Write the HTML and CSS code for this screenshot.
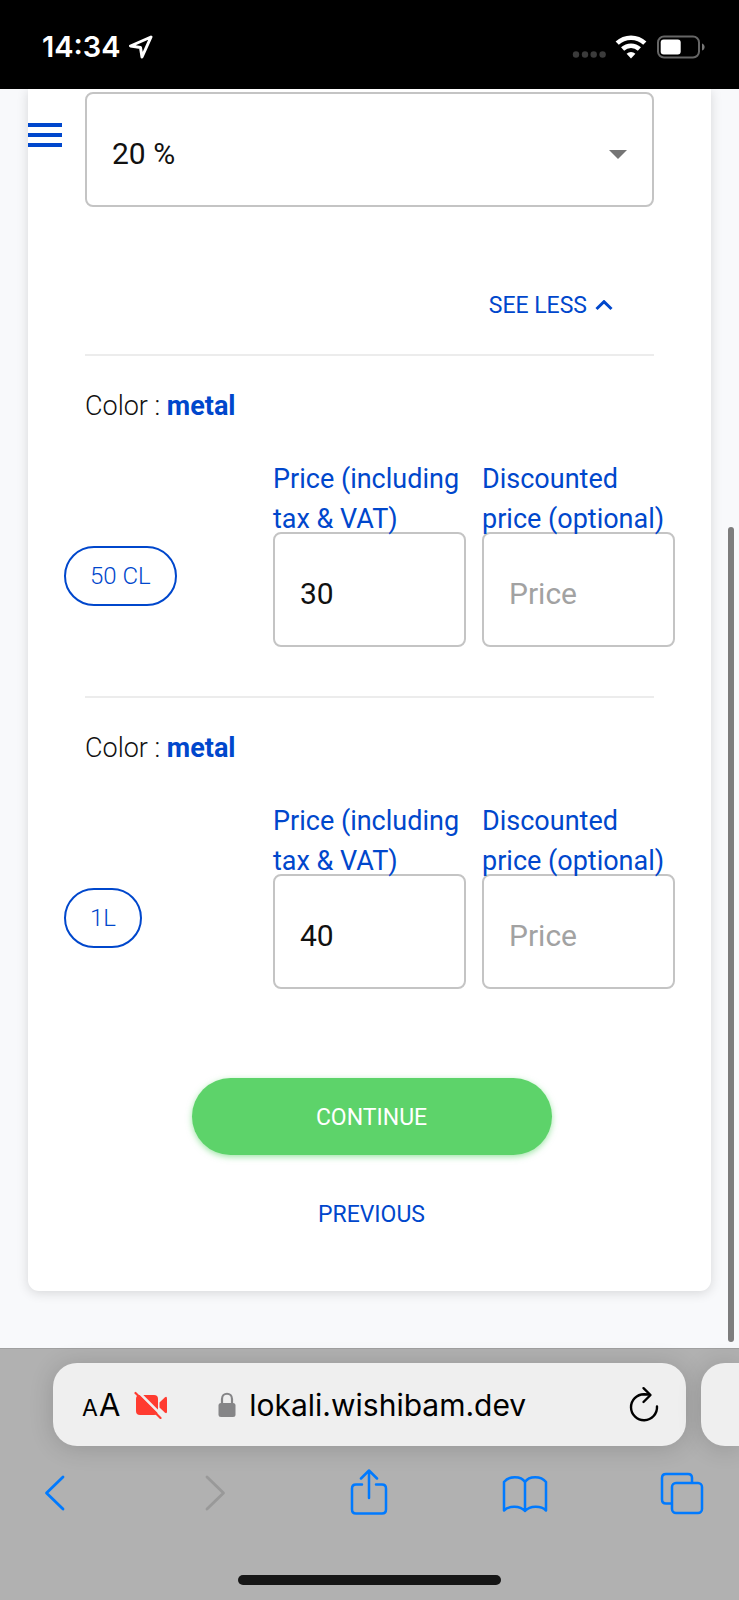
FILE: index.html
```html
<!DOCTYPE html>
<html lang="en">
  <head>
    <meta charset="UTF-8" />
    <meta name="viewport" content="width=device-width, initial-scale=1.0" />
    <title>Lokali - Product prices</title>
    <link rel="stylesheet" href="styles.css">
  </head>
  <body>
    <header class="status-bar">
      <div class="status-time">
        <span>14:34</span>
        <svg width="24" height="24" viewBox="0 0 24 24" fill="none" stroke="#fff" stroke-width="3" stroke-linejoin="round">
          <path d="M22 2 L1.500 11 L11.500 12.500 L13 22 Z" />
        </svg>
      </div>
      <div class="status-icons">
        <svg width="34" height="24" viewBox="0 0 34 24" fill="#3b3b3b">
          <circle cx="4" cy="19.500" r="3.200" />
          <circle cx="13" cy="19.500" r="3.200" />
          <circle cx="21.700" cy="19.500" r="3.200" />
          <circle cx="30.600" cy="19.500" r="3.200" />
        </svg>
        <svg width="32" height="24" viewBox="0 0 32 24" fill="none" stroke="#fff" stroke-width="4.600">
          <path d="M2.200 8.200 A20 20 0 0 1 29.800 8.200" />
          <path d="M7.600 14 A12.400 12.400 0 0 1 24.400 14" />
          <path d="M16 23.500 L11.600 18.800 A6.500 6.500 0 0 1 20.400 18.800 Z" fill="#fff" stroke="none" />
        </svg>
        <svg width="50" height="24" viewBox="0 0 50 24">
          <rect x="2" y="1.500" width="41" height="21" rx="6" fill="none" stroke="#666" stroke-width="2" />
          <rect x="4.700" y="4.500" width="20" height="15" rx="3" fill="#fff" />
          <path d="M46 8.500 C49.500 9.500 49.500 14.500 46 15.500 Z" fill="#777" />
        </svg>
      </div>
    </header>

    <main class="page">
      <button type="button" class="menu-button" aria-label="Menu">
        <span></span>
        <span></span>
        <span></span>
      </button>

      <form class="card">
        <div class="select-box">
          <select class="field" aria-label="VAT rate">
            <option>20 %</option>
            <option>10 %</option>
            <option>5.5 %</option>
          </select>
          <svg class="select-arrow" width="18" height="9" viewBox="0 0 18 9" fill="#757575">
            <path d="M0 0 H18 L9 9 Z" />
          </svg>
        </div>

        <button type="button" class="text-button see-less">
          SEE LESS
          <svg width="18" height="12" viewBox="0 0 18 12" fill="none" stroke="#0047cc" stroke-width="3">
            <path d="M1.500 9 L9 1.700 L16.500 9" />
          </svg>
        </button>

        <section class="variant">
          <p class="variant-color">Color : <strong>metal</strong></p>
          <div class="variant-row">
            <div class="chip-cell"><span class="chip">50 CL</span></div>
            <div class="price">
              <label for="price50">Price (including tax &amp; VAT)</label>
              <input class="field" type="text" id="price50" name="price50" value="30" />
            </div>
            <div class="price">
              <label for="discount50">Discounted price (optional)</label>
              <input class="field" type="text" id="discount50" name="discount50" placeholder="Price" />
            </div>
          </div>
        </section>

        <section class="variant">
          <p class="variant-color">Color : <strong>metal</strong></p>
          <div class="variant-row">
            <div class="chip-cell"><span class="chip">1L</span></div>
            <div class="price">
              <label for="price1">Price (including tax &amp; VAT)</label>
              <input class="field" type="text" id="price1" name="price1" value="40" />
            </div>
            <div class="price">
              <label for="discount1">Discounted price (optional)</label>
              <input class="field" type="text" id="discount1" name="discount1" placeholder="Price" />
            </div>
          </div>
        </section>

        <div class="actions">
          <button type="button" class="continue-button">CONTINUE</button>
          <button type="button" class="text-button">PREVIOUS</button>
        </div>
      </form>

      <div class="scroll-thumb"></div>
    </main>

    <footer class="browser-bar">
      <div class="tabs">
        <div class="address">
          <button type="button" class="icon-button text-size" aria-label="Text size"><small>A</small>A</button>
          <svg width="34" height="28" viewBox="0 0 34 28">
            <rect x="2" y="4" width="22" height="20" rx="4" fill="#ff3b30" />
            <path d="M25.500 11.500 L31 6.200 Q33 5 33 7.500 V20.500 Q33 23 31 21.800 L25.500 16.500 Z" fill="#ff3b30" />
            <path d="M3.500 0 L29.500 26" stroke="#efefef" stroke-width="2.500" />
            <path d="M1.500 2 L26.500 27" stroke="#ff3b30" stroke-width="2.200" stroke-linecap="round" />
          </svg>
          <div class="site">
            <svg width="18" height="26" viewBox="0 0 18 26">
              <rect x="0.500" y="11" width="17" height="14" rx="2.500" fill="#858587" />
              <path d="M4 12 V7 C4 0 14 0 14 7 V12" fill="none" stroke="#858587" stroke-width="2.200" />
            </svg>
            <span>lokali.wishibam.dev</span>
          </div>
          <button type="button" class="icon-button" aria-label="Reload">
            <svg width="30" height="38" viewBox="0 0 30 38" fill="none" stroke="#000" stroke-width="2.400" stroke-linecap="round" stroke-linejoin="round">
              <path d="M28 20.500 A13 13 0 1 1 15 8.200 L20 8.500" />
              <path d="M14.500 2.200 L21.500 9 L14.500 16" />
            </svg>
          </button>
        </div>
        <div class="next-tab"></div>
      </div>

      <nav class="toolbar">
        <button type="button" class="icon-button" aria-label="Back">
          <svg width="22" height="46" viewBox="0 0 22 46" fill="none" stroke="#007aff" stroke-width="2.800" stroke-linecap="round" stroke-linejoin="round">
            <path d="M19 8 L2.500 24 L19 40" />
          </svg>
        </button>
        <button type="button" class="icon-button" aria-label="Forward" disabled>
          <svg width="30" height="46" viewBox="0 0 30 46" fill="none" stroke="#999" stroke-width="2.800" stroke-linecap="round" stroke-linejoin="round">
            <path d="M10 8 L26.500 24 L10 40" />
          </svg>
        </button>
        <button type="button" class="icon-button" aria-label="Share">
          <svg width="38" height="46" viewBox="0 0 38 46" fill="none" stroke="#007aff" stroke-width="2.500" stroke-linecap="round" stroke-linejoin="round">
            <path d="M12 15.500 H6 Q2 15.500 2 19.500 V40.500 Q2 44.500 6 44.500 H32 Q36 44.500 36 40.500 V19.500 Q36 15.500 32 15.500 H26" />
            <path d="M19 29 V2 M11 9.500 L19 1.500 L27 9.500" />
          </svg>
        </button>
        <button type="button" class="icon-button" aria-label="Bookmarks">
          <svg width="46" height="46" viewBox="0 0 46 46" fill="none" stroke="#007aff" stroke-width="2.500" stroke-linecap="round" stroke-linejoin="round">
            <path d="M23 13 C19 6.500 7 6.500 2 13 V41.500 C7 36.500 18 36.500 23 42 C28 36.500 39 36.500 44 41.500 V13 C39 6.500 27 6.500 23 13 V42" />
          </svg>
        </button>
        <button type="button" class="icon-button" aria-label="Tabs">
          <svg width="44" height="46" viewBox="0 0 44 46" fill="none" stroke="#007aff" stroke-width="2.500">
            <path d="M11 34.500 H6 Q2 34.500 2 30.500 V9 Q2 5 6 5 H28 Q32 5 32 9 V14" />
            <rect x="12" y="14" width="30" height="30" rx="4" />
          </svg>
        </button>
      </nav>

      <div class="home-indicator"></div>
    </footer>
  </body>
</html>
```

FILE: styles.css
```css
* {
  box-sizing: border-box;
}

body {
  display: flex;
  flex-direction: column;
  min-height: 100vh;
  margin: 0;
  background-color: #f8f9fb;
  font-family: Roboto, sans-serif;
  font-size: 27px;
  line-height: 40px;
  color: #111;
  overflow-x: hidden;
}

button {
  padding: 0;
  border: none;
  background: none;
  font-family: inherit;
  cursor: pointer;
}

svg {
  display: block;
  flex: none;
}

/* Phone status bar */
.status-bar {
  display: flex;
  justify-content: space-between;
  align-items: center;
  height: 89px;
  padding: 5px 33px 0 42px;
  background-color: #000;
  color: #fff;
}

.status-time {
  display: flex;
  align-items: center;
  gap: 8px;
  font-family: Inter, sans-serif;
  font-size: 29px;
  font-weight: 600;
}

.status-icons {
  display: flex;
  gap: 9px;
}

/* Page */
.page {
  position: relative;
  flex: 1;
  padding: 0 28px 57px;
}

.menu-button {
  position: absolute;
  top: 34px;
  left: 28px;
  display: flex;
  flex-direction: column;
  gap: 6px;
  width: 34px;
}

.menu-button span {
  height: 4px;
  background-color: #0047cc;
}

.card {
  display: flex;
  flex-direction: column;
  padding: 3px 57px 56px;
  border-radius: 0 0 11px 11px;
  background-color: #fff;
  box-shadow: 0 2px 12px rgba(0, 0, 0, 0.14);
}

.field {
  display: block;
  width: 100%;
  height: 115px;
  padding: 8px 25px 0;
  border: 2px solid #c4c4c4;
  border-radius: 8px;
  background-color: #fff;
  font-family: inherit;
  font-size: 30px;
  color: #111;
  appearance: none;
}

.field::placeholder {
  color: #a2a2a2;
  opacity: 1;
}

.select-box {
  position: relative;
}

.select-arrow {
  position: absolute;
  top: 58px;
  right: 27px;
  pointer-events: none;
}

.text-button {
  font-size: 23px;
  line-height: 40px;
  color: #0047cc;
}

.see-less {
  display: flex;
  align-items: center;
  align-self: flex-end;
  gap: 8px;
  margin: 79px 41px 28px 0;
}

.variant {
  padding: 30px 0 49px;
  border-top: 2px solid #ececec;
}

.variant:last-of-type {
  padding-bottom: 89px;
}

.variant-color {
  margin: 0 0 33px;
  font-weight: 300;
}

.variant-color strong {
  font-weight: 700;
  color: #0047cc;
}

.variant-row {
  display: grid;
  grid-template-columns: 1fr 1fr 1fr;
  gap: 16px;
  margin: 0 -21px;
}

.chip-cell {
  padding-top: 87px;
}

.chip {
  display: inline-block;
  padding: 8px 24px;
  border: 2px solid #0047cc;
  border-radius: 30px;
  font-size: 24px;
  font-weight: 300;
  color: #0047cc;
}

/* the label's last line sits on the field border */
.price label {
  position: relative;
  display: block;
  margin-bottom: -7px;
  color: #0047cc;
}

.actions {
  display: flex;
  flex-direction: column;
  align-items: center;
  gap: 40px;
  padding-left: 4px;
}

.continue-button {
  width: 360px;
  max-width: 100%;
  height: 77px;
  padding-top: 2px;
  border-radius: 39px;
  background-color: #5dd36a;
  box-shadow: 0 2px 6px rgba(93, 211, 106, 0.6);
  font-size: 23px;
  color: #fff;
}

.scroll-thumb {
  position: absolute;
  top: 438px;
  right: 5px;
  bottom: 6px;
  width: 6px;
  border-radius: 3px;
  background-color: #7d7d7d;
}

/* Browser bar */
.browser-bar {
  padding: 14px 0 15px;
  border-top: 1px solid #a0a0a0;
  background-color: #b1b1b1;
}

.tabs {
  display: flex;
  gap: 15px;
  padding-left: 53px;
}

.address,
.next-tab {
  height: 83px;
  background-color: #efefef;
  box-shadow: 0 2px 24px rgba(0, 0, 0, 0.16);
}

.address {
  display: flex;
  flex: 1;
  align-items: center;
  padding: 0 27px 0 29px;
  border-radius: 24px;
  font-family: Inter, sans-serif;
  color: #000;
}

.next-tab {
  width: 38px;
  border-radius: 24px 0 0 24px;
}

.text-size {
  margin-right: 14px;
  font-size: 31px;
  color: #000;
}

.text-size small {
  margin-right: 1px;
  font-size: 23px;
}

.site {
  display: flex;
  flex: 1;
  align-items: center;
  gap: 13px;
  padding-left: 50px;
  font-size: 30px;
}

.toolbar {
  display: flex;
  justify-content: space-between;
  padding: 23px 34px 0 32px;
}

.toolbar .icon-button {
  display: flex;
  justify-content: center;
  width: 46px;
}

.home-indicator {
  width: 263px;
  height: 10px;
  margin: 60px auto 0;
  border-radius: 5px;
  background-color: #161616;
}
```
